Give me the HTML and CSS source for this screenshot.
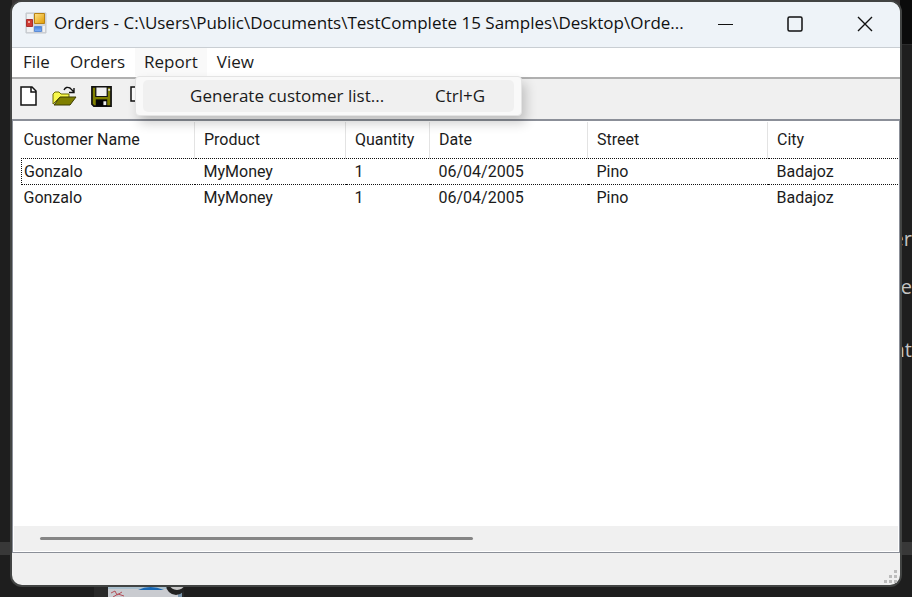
FILE: index.html
```html
<!DOCTYPE html>
<html lang="en">
<head>
<meta charset="utf-8">
<title>Orders</title>
<link rel="stylesheet" href="styles.css">
</head>
<body>
<div class="desktop" aria-hidden="true">
  <div class="panel-top"></div>
  <div class="panel-right"></div>
  <div class="band"></div>
  <span class="peek peek-a">er</span>
  <span class="peek peek-b">te</span>
  <span class="peek peek-c">nt</span>
  <svg class="top-marks" width="400" height="2" viewBox="0 0 400 2"><path d="M8 0h3M24 0h4" stroke="#b03060" stroke-width="3"/><path d="M105 1h3M219 1h2M326 1h3M397 1h3" stroke="#bbb" stroke-width="2"/></svg>
  <svg class="thumb" width="90" height="12" viewBox="0 0 90 12"><path d="M0 0h90v12H0z" fill="#292929"/><path d="M14 0h74v12H14z" fill="#c9cbd0"/><path d="M14 0h74v4H14z" fill="#a9bfcd"/><path d="M44 5Q56-1 70 5z" fill="#1767b4"/><path d="M84 0h4v12h-4z" fill="#7893aa"/><path d="M17 8l4-2 2 4 5-3M19 12l5-3 6 2" stroke="#b44d57" fill="none"/><path d="M72 0a10 10 0 0 0 20 0" fill="#222"/><path d="M76 0a7 5 0 0 0 14 0" fill="#c8c8c8"/></svg>
</div>
<main class="window">
  <header class="titlebar">
    <svg class="app-icon" width="22" height="22" viewBox="0 0 22 22">
      <defs>
        <linearGradient id="gold" x2="1" y2="1"><stop stop-color="#ffe48a"/><stop offset="1" stop-color="#e09a00"/></linearGradient>
        <linearGradient id="blue" x2="0" y2="1"><stop stop-color="#3f7de0"/><stop offset="1" stop-color="#86b4f6"/></linearGradient>
      </defs>
      <path d="M1 1h20v20H1z" fill="#d3d6da" stroke="#c3c7cc"/>
      <path d="M2 2h6v5H2zM2 15h6v5H2zM18 14h2v6h-2z" fill="#f0f1f3"/>
      <path d="M9.500 1.500h10v10h-10z" fill="url(#gold)" stroke="#b98212"/>
      <path d="M1.500 7.500h6v7h-6z" fill="#cf3a32" stroke="#a93030"/><path d="M3 9h2v2H3z" fill="#f0a8a0"/>
      <path d="M9.500 14.500h7v5h-7z" fill="url(#blue)" stroke="#5c8cd6"/>
    </svg>
    <h1 class="title">Orders - C:\Users\Public\Documents\TestComplete 15 Samples\Desktop\Orde...</h1>
    <div class="controls">
      <button class="control" aria-label="Minimize"><svg width="16" height="16" viewBox="0 0 16 16"><path d="M1 8.500h15" stroke="#111"/></svg></button>
      <button class="control" aria-label="Maximize"><svg width="16" height="16" viewBox="0 0 16 16"><rect x="1" y="1" width="14" height="14" rx="1.500" fill="none" stroke="#111" stroke-width="1.500"/></svg></button>
      <button class="control" aria-label="Close"><svg width="16" height="16" viewBox="0 0 16 16"><path d="M1 1l14 14M15 1L1 15" stroke="#111" stroke-width="1.400"/></svg></button>
    </div>
  </header>
  <nav class="menubar">
    <button class="menu">File</button>
    <button class="menu">Orders</button>
    <div class="menu-open">
      <button class="menu active" aria-expanded="true">Report</button>
      <div class="dropdown">
        <button class="command"><span class="command-name">Generate customer list...</span><span>Ctrl+G</span></button>
      </div>
    </div>
    <button class="menu">View</button>
  </nav>
  <div class="toolbar">
    <button class="tool" aria-label="New"><svg width="18" height="20" viewBox="0 0 18 20"><path d="M1 1h11l4 4v14H1z" fill="#fff" stroke="#111" stroke-width="1.500"/><path d="M11 1v5h5" fill="none" stroke="#111" stroke-width="1.500"/></svg></button>
    <button class="tool" aria-label="Open"><svg width="25" height="20" viewBox="0 0 25 20"><path d="M1 18V8l2-2h4l2 2h8v4H7z" fill="#f8f84c" stroke="#6b6b00"/><path d="M2 19l6-8h16l-6 8z" fill="#808000" stroke="#3b3b00"/><path d="M12 4q2-4 6-2l4 4M22 2v4.500h-5" fill="none" stroke="#111" stroke-width="1.400"/></svg></button>
    <button class="tool" aria-label="Save"><svg width="21" height="21" viewBox="0 0 22 22"><path d="M1 1h20v20H3l-2-2z" fill="#808000" stroke="#111" stroke-width="1.800"/><path d="M5 1h12v10H5z" fill="#f0f0f0" stroke="#111" stroke-width="1.300"/><path d="M5 14h12v7H5z" fill="#050505"/><path d="M13 16h3v4h-3z" fill="#f0f0f0"/><path d="M18 3h2v2h-2z" fill="#ddd"/></svg></button>
    <button class="tool" aria-label="New order"><svg width="20" height="20" viewBox="0 0 20 20"><path d="M5 1h14v14H5z" fill="#fff" stroke="#111" stroke-width="1.500"/></svg></button>
  </div>
  <section class="list">
    <div class="viewport">
      <table class="orders">
        <colgroup><col class="c-name"><col class="c-product"><col class="c-quantity"><col class="c-date"><col class="c-street"><col></colgroup>
        <thead><tr><th>Customer Name</th><th>Product</th><th>Quantity</th><th>Date</th><th>Street</th><th>City</th></tr></thead>
        <tbody>
          <tr class="focused"><td>Gonzalo</td><td>MyMoney</td><td>1</td><td>06/04/2005</td><td>Pino</td><td>Badajoz</td></tr>
          <tr><td>Gonzalo</td><td>MyMoney</td><td>1</td><td>06/04/2005</td><td>Pino</td><td>Badajoz</td></tr>
        </tbody>
      </table>
    </div>
    <div class="scrollbar"><div class="thumbbar"></div></div>
  </section>
  <footer class="status">
    <svg width="13" height="13" viewBox="0 0 13 13" fill="#bcbcbc"><path d="M10 0h3v3h-3zM5 5h3v3H5zM10 5h3v3h-3zM0 10h3v3H0zM5 10h3v3H5zM10 10h3v3h-3z"/></svg>
  </footer>
</main>
</body>
</html>
```
FILE: styles.css
```css
* {
  box-sizing: border-box;
}

body {
  margin: 0;
  height: 100vh;
  padding: 2px 12px 12px;
  position: relative;
  overflow: hidden;
  background: #1e1e1e;
  color: #1b1b1b;
  font-family: "Open Sans", "Noto Sans", sans-serif;
  font-size: 17px;
}

button {
  margin: 0;
  padding: 0;
  border: 0;
  background: none;
  color: inherit;
  font: inherit;
}

svg {
  display: block;
}

/* Desktop visible around the window */
.desktop > * {
  position: absolute;
}

.panel-top {
  inset: 0 12px auto 12px;
  height: 20px;
  background: #373334;
}

.panel-right {
  top: 0;
  right: 0;
  width: 12px;
  height: 45px;
  background: #0b0b0b;
  border-bottom: 1px solid #2b2b2b;
}

.band {
  left: 0;
  right: 0;
  bottom: 42px;
  height: 13px;
  background: #383838;
}

.peek {
  right: 0;
  color: #c4c4c4;
  font-size: 20px;
  line-height: 24px;
}

.peek-a {
  top: 227px;
}

.peek-b {
  top: 275px;
}

.peek-c {
  top: 338px;
}

.top-marks {
  top: 0;
  left: 239px;
}

.thumb {
  bottom: 0;
  left: 94px;
}

/* Window */
.window {
  position: relative;
  height: 100%;
  display: flex;
  flex-direction: column;
  border-radius: 10px;
  background: #f0f0f0;
  box-shadow: 0 0 0 2px #424443;
}

.titlebar {
  flex: none;
  display: flex;
  align-items: flex-start;
  height: 46px;
  padding-left: 13px;
  border-bottom: 1px solid #c9ced3;
  border-radius: 10px 10px 0 0;
  background: #eef3f8;
}

.app-icon {
  margin-top: 10px;
}

.title {
  flex: 1;
  min-width: 0;
  margin: 9px 0 0 7px;
  overflow: hidden;
  color: #111;
  font-size: 17px;
  font-weight: 400;
  line-height: 24px;
  white-space: nowrap;
}

.controls {
  display: flex;
}

.control {
  display: grid;
  place-items: center;
  width: 70px;
  height: 43px;
}

.menubar {
  flex: none;
  display: flex;
  height: 31px;
  padding-left: 1px;
  background: #fff;
  border-bottom: 2px solid #b0b0b0;
}

.menu {
  height: 28px;
  padding: 0 10px;
  line-height: 28px;
}

.menu-open {
  position: relative;
}

.active {
  padding: 0 9px;
  background: #f9f9f9;
}

.dropdown {
  position: absolute;
  z-index: 1;
  top: 28px;
  left: 0;
  width: 387px;
  padding: 3px 7px;
  border: 1px solid #e4e4e4;
  border-radius: 4px;
  background: #f9f9f9;
  box-shadow: 4px 7px 12px rgba(0, 0, 0, 0.2);
}

.command {
  display: flex;
  justify-content: space-between;
  width: 100%;
  height: 32px;
  padding: 0 29px 0 47px;
  border-radius: 5px;
  background: #f0f0f0;
  line-height: 32px;
}

.toolbar {
  flex: none;
  display: flex;
  align-items: flex-start;
  gap: 14px;
  height: 40px;
  padding: 7px 8px;
}

/* Orders list */
.list {
  flex: 1;
  min-height: 0;
  display: flex;
  flex-direction: column;
  padding: 1px;
  border: 1px solid #8b8f98;
  border-top-width: 2px;
  background: #fff;
}

.viewport {
  flex: 1;
  min-height: 0;
  overflow: hidden;
  padding-left: 7px;
}

.orders {
  width: 100%;
  table-layout: fixed;
  border-collapse: collapse;
  font-family: Roboto, "Liberation Sans", sans-serif;
  font-size: 16px;
}

.c-name {
  width: 173px;
}

.c-product {
  width: 151px;
}

.c-quantity {
  width: 84px;
}

.c-date {
  width: 158px;
}

.c-street {
  width: 180px;
}

.orders th,
.orders td {
  padding: 0 0 0 9px;
  text-align: left;
  font-weight: 400;
  white-space: nowrap;
}

.orders th {
  height: 36px;
  border-right: 1px solid #e3e3e3;
}

.orders th:last-child {
  border-right: 0;
}

.orders td {
  height: 26px;
}

.orders th:first-child,
.orders td:first-child {
  padding-left: 2px;
}

.focused td {
  border-top: 1px dotted #111;
  border-bottom: 1px dotted #111;
}

.focused td:first-child {
  border-left: 1px dotted #111;
}

.scrollbar {
  flex: none;
  height: 25px;
  padding: 11px 26px;
  background: #f0f0f0;
}

.thumbbar {
  width: 52%;
  height: 3px;
  border-radius: 2px;
  background: #858585;
}

.status {
  flex: none;
  display: flex;
  align-items: flex-end;
  justify-content: flex-end;
  height: 32px;
  padding: 0 3px 2px;
}
```
